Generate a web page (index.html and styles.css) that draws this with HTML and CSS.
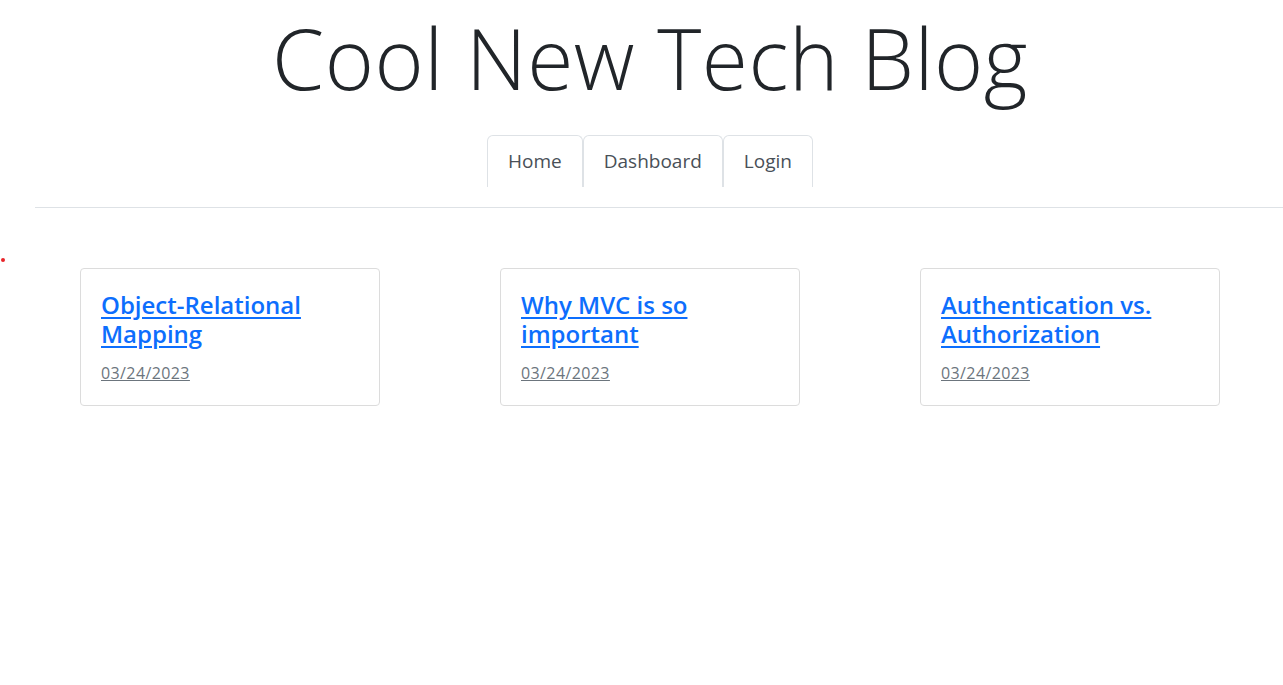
FILE: index.html
```html
<!DOCTYPE html>
<html lang="en">
<head>
<meta charset="utf-8">
<title>Cool New Tech Blog</title>
<link rel="stylesheet" href="styles.css">
</head>
<body>
<header class="site-header">
  <h1 class="site-title">Cool New Tech Blog</h1>
  <nav class="tabs">
    <a class="tab" href="#">Home</a>
    <a class="tab" href="#">Dashboard</a>
    <a class="tab" href="#">Login</a>
  </nav>
</header>
<div class="divider"></div>
<span class="dot"></span>
<main class="posts">
  <article class="card">
    <h4 class="card-title"><a href="#">Object-Relational Mapping</a></h4>
    <a class="card-date" href="#">03/24/2023</a>
  </article>
  <article class="card">
    <h4 class="card-title"><a href="#">Why MVC is so important</a></h4>
    <a class="card-date" href="#">03/24/2023</a>
  </article>
  <article class="card">
    <h4 class="card-title"><a href="#">Authentication vs. Authorization</a></h4>
    <a class="card-date" href="#">03/24/2023</a>
  </article>
</main>
</body>
</html>
```
FILE: styles.css
```css
html, body {
  margin: 0;
  padding: 0;
  background: #fff;
}
body {
  font-family: "Open Sans", "Noto Sans", sans-serif;
  color: #212529;
  position: relative;
  width: 1283px;
  overflow-x: hidden;
}
.site-header {
  display: flex;
  flex-direction: column;
  align-items: center;
  padding-left: 17px;
}
.site-title {
  margin: 0;
  font-size: 84px;
  font-weight: 300;
  line-height: 115px;
  letter-spacing: 0.5px;
  color: #212529;
}
.tabs {
  display: flex;
  margin-top: 20px;
}
.tab {
  display: block;
  height: 51px;
  line-height: 50px;
  padding: 0 20px;
  font-size: 19px;
  color: #495057;
  text-decoration: none;
  border: 1px solid #dee2e6;
  border-bottom: none;
  border-radius: 6px 6px 0 0;
}
.divider {
  margin-top: 20px;
  margin-left: 35px;
  border-top: 1px solid #dee2e6;
}
.dot {
  position: absolute;
  left: 1px;
  top: 258px;
  width: 4px;
  height: 4px;
  border-radius: 50%;
  background: #e8242a;
}
.posts {
  display: grid;
  grid-template-columns: repeat(3, 420px);
  justify-items: center;
  padding-left: 20px;
  margin-top: 60px;
}
.card {
  box-sizing: border-box;
  width: 300px;
  height: 138px;
  border: 1px solid #dcdcdc;
  border-radius: 4px;
  padding: 21px 20px 0;
}
.card-title {
  margin: 0 0 13px;
  font-size: 24px;
  font-weight: 600;
  line-height: 29px;
}
.card-title a {
  color: #0d6efd;
  text-decoration: underline;
  text-underline-offset: 3px;
}
.card-date {
  display: inline-block;
  font-size: 16px;
  line-height: 24px;
  letter-spacing: 0.4px;
  color: #6c757d;
  text-decoration: underline;
  text-decoration-color: #6c757d;
}
```
